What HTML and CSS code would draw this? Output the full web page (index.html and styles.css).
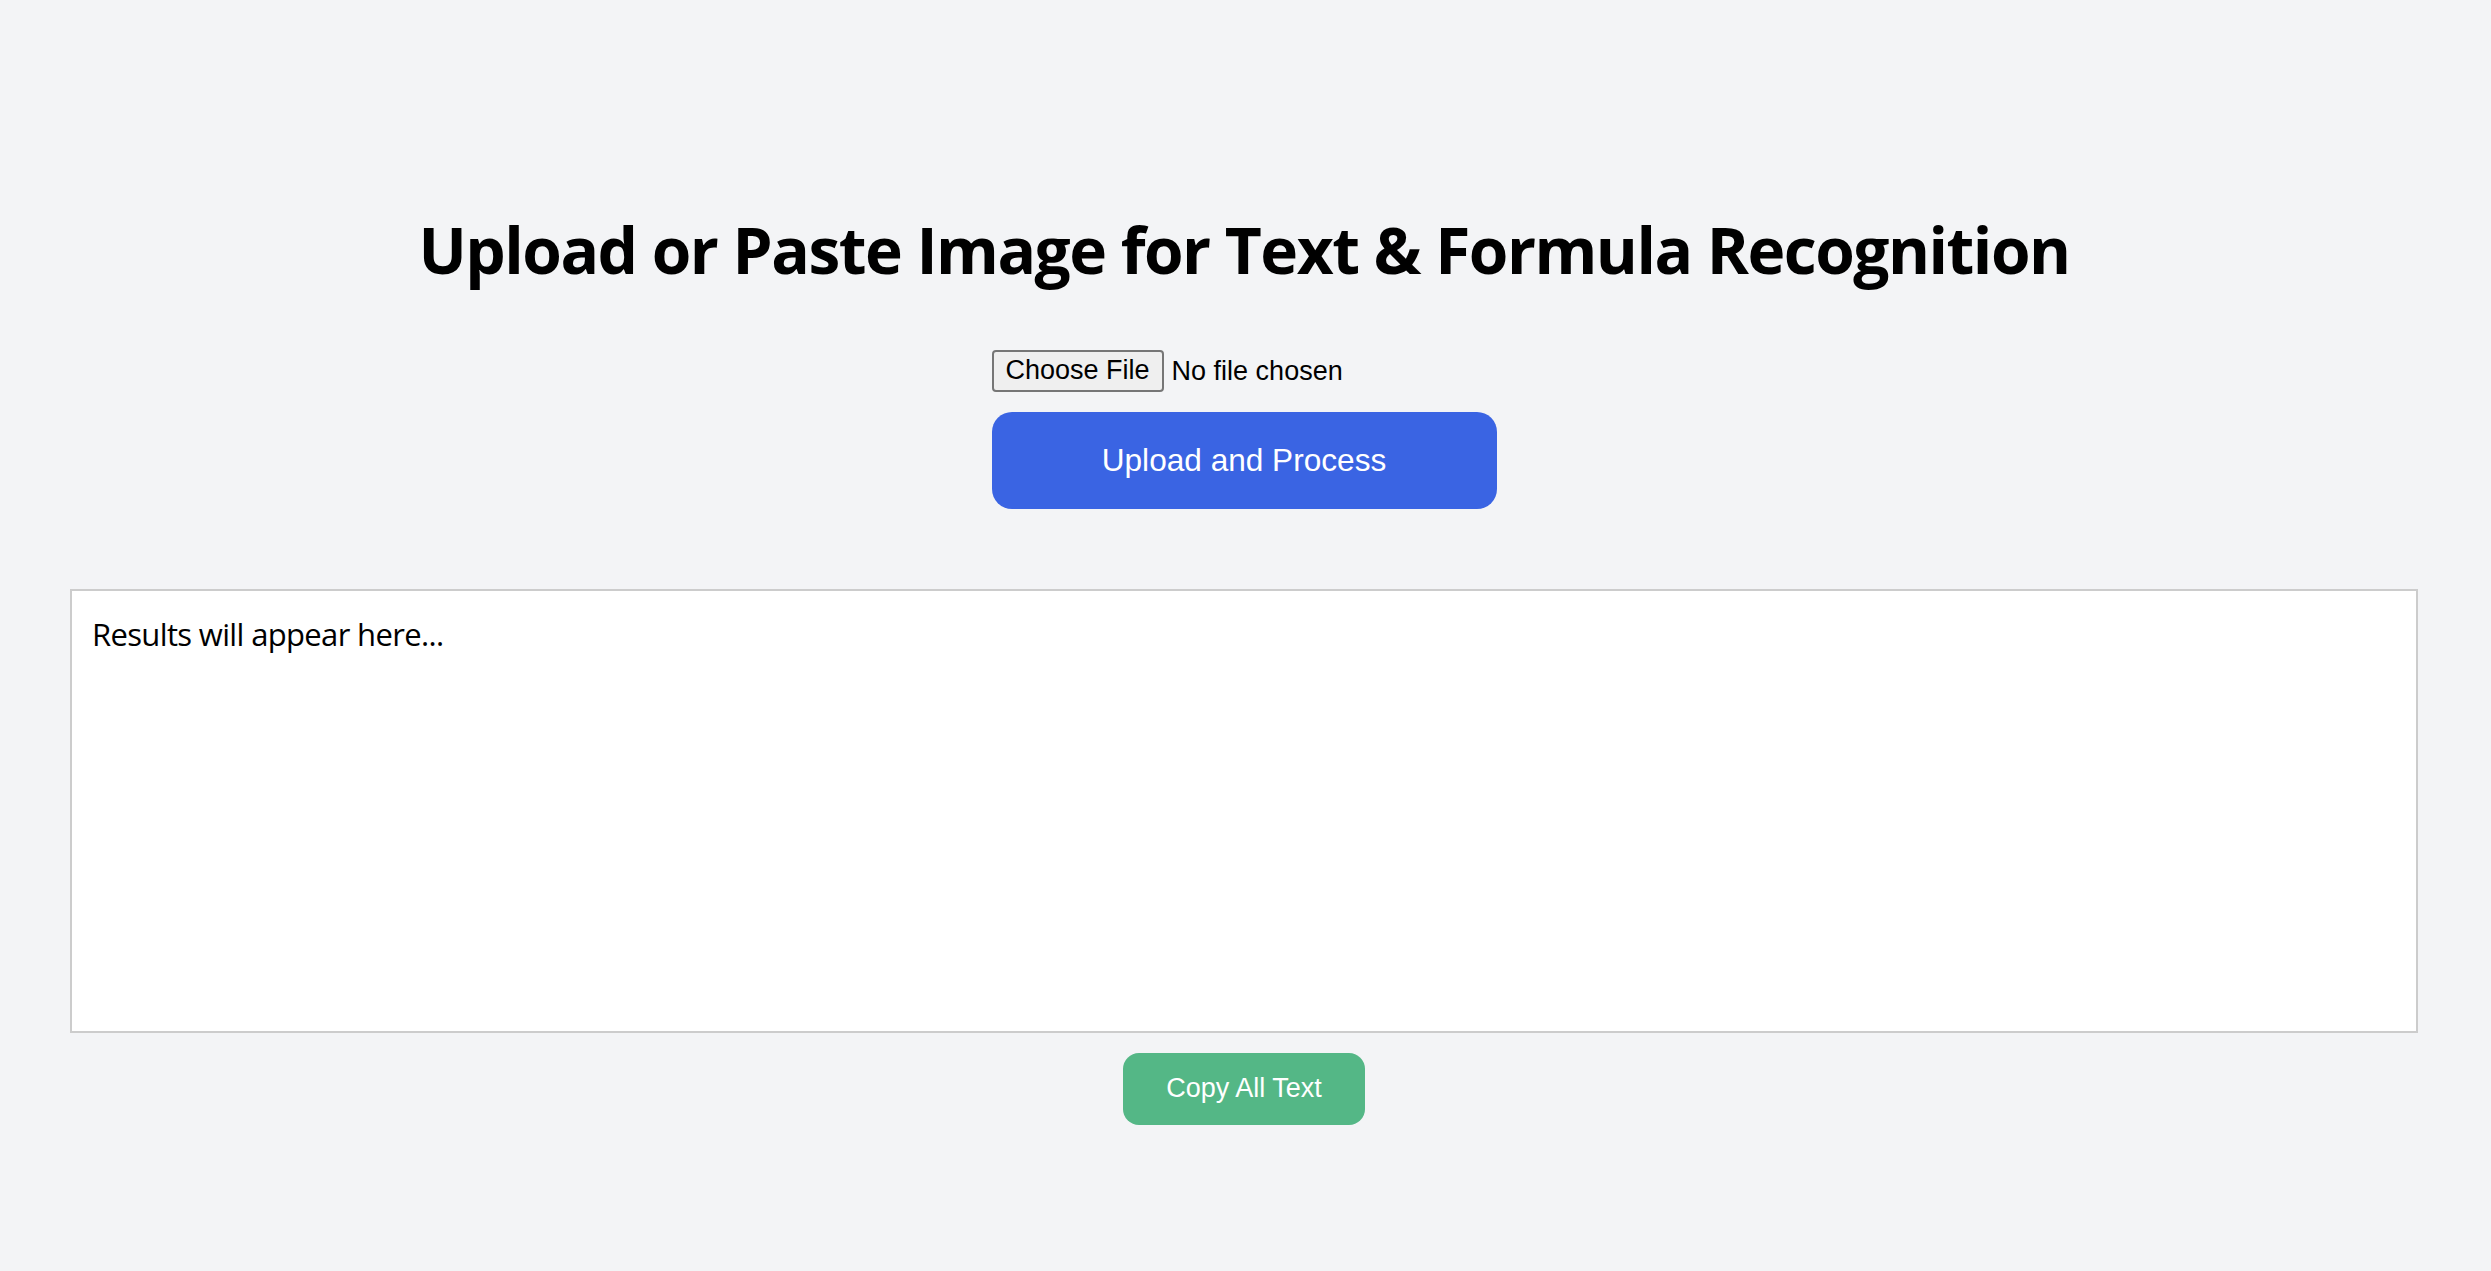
FILE: index.html
```html
<!DOCTYPE html>
<html lang="en">
<head>
<meta charset="utf-8">
<title>Text & Formula Recognition</title>
<link rel="stylesheet" href="styles.css">
</head>
<body>
  <main class="page">
    <h1 class="title">Upload or Paste Image for Text &amp; Formula Recognition</h1>
    <form class="upload-form">
      <input class="file-input" type="file" accept="image/*">
      <button class="btn btn-upload" type="button">Upload and Process</button>
    </form>
    <div class="results">Results will appear here...</div>
    <div class="copy-row">
      <button class="btn btn-copy" type="button">Copy All Text</button>
    </div>
  </main>
</body>
</html>
```

FILE: styles.css
```css
html, body {
  margin: 0;
  padding: 0;
}

body {
  background: #f3f4f6;
  font-family: "Open Sans", "Noto Sans", sans-serif;
  color: #000;
}

.page {
  padding: 212px 73px 0 70px;
  display: flex;
  flex-direction: column;
  align-items: stretch;
}

.title {
  margin: 0;
  text-align: center;
  font-family: "Open Sans", "Noto Sans", sans-serif;
  font-weight: 700;
  font-size: 64px;
  line-height: 1.2;
  letter-spacing: -1.5px;
}

.upload-form {
  align-self: center;
  width: 505px;
  margin-top: 61px;
  display: flex;
  flex-direction: column;
  align-items: flex-start;
  gap: 20px;
}

.file-input {
  font-family: "Liberation Sans", Arial, sans-serif;
  font-size: 27px;
  color: #000;
  height: 42px;
}

.file-input::file-selector-button {
  font: inherit;
  padding: 2px 12px;
  margin-right: 8px;
  border: 2px solid #767676;
  border-radius: 4px;
  background: #efefef;
  color: #000;
  height: 42px;
}

.btn {
  border: none;
  color: #fff;
  font-family: "Liberation Sans", Arial, sans-serif;
  cursor: pointer;
}

.btn-upload {
  width: 505px;
  height: 97px;
  padding: 0;
  font-size: 31.6px;
  background: #3a64e3;
  border-radius: 20px;
}

.results {
  margin-top: 80px;
  min-height: 400px;
  padding: 23px 20px 17px;
  border: 2px solid #cccccc;
  background: #fff;
  font-size: 31px;
  line-height: 1.33;
  letter-spacing: -0.65px;
}

.copy-row {
  display: flex;
  justify-content: center;
  margin-top: 20px;
}

.btn-copy {
  padding: 20px 43px 21px;
  font-size: 27px;
  line-height: 1.15;
  background: #54b786;
  border-radius: 16px;
}
```
